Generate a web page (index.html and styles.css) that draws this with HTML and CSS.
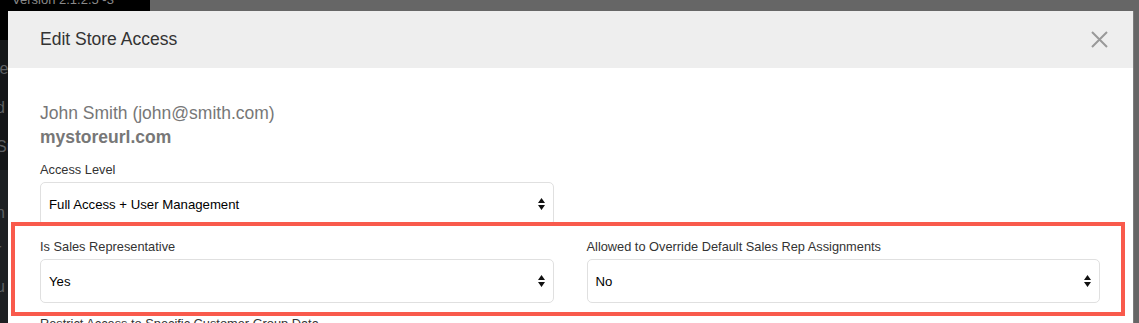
FILE: index.html
```html
<!DOCTYPE html>
<html lang="en">

<head>
    <meta charset="UTF-8">
    <meta name="viewport" content="width=device-width, initial-scale=1.0">
    <title>Edit Store Access</title>
    <link rel="stylesheet" href="styles.css">
</head>

<body>
    <div class="page">
        <aside class="sidebar">
            <div class="version">Version 2.1.2.5 -3</div>
            <div class="nav-gap"></div>
            <ul class="nav nav-upper">
                <li>ie</li>
                <li>d</li>
                <li>Su</li>
            </ul>
            <ul class="nav nav-lower">
                <li>n</li>
                <li>r</li>
                <li>u</li>
            </ul>
        </aside>
        <main class="dimmed"></main>
    </div>

    <div class="modal">
        <div class="modal-header">
            <h4 class="modal-title">Edit Store Access</h4>
            <svg class="close" width="17" height="17" viewBox="0 0 17 17">
                <path d="M1 1 L16 16 M16 1 L1 16" stroke="#999" stroke-width="2" fill="none" />
            </svg>
        </div>

        <div class="modal-body">
            <div class="user-name">John Smith (john@smith.com)</div>
            <div class="store-url">mystoreurl.com</div>

            <div class="form-grid">
                <div class="form-group">
                    <label>Access Level</label>
                    <div class="select">
                        <span>Full Access + User Management</span>
                        <svg class="arrows" width="7" height="12" viewBox="0 0 7 12">
                            <path d="M0 5 L3.5 0 L7 5 Z M0 7 L3.5 12 L7 7 Z" fill="#111" />
                        </svg>
                    </div>
                </div>
                <div></div>

                <div class="form-group">
                    <label>Is Sales Representative</label>
                    <div class="select">
                        <span>Yes</span>
                        <svg class="arrows" width="7" height="12" viewBox="0 0 7 12">
                            <path d="M0 5 L3.5 0 L7 5 Z M0 7 L3.5 12 L7 7 Z" fill="#111" />
                        </svg>
                    </div>
                </div>
                <div class="form-group">
                    <label>Allowed to Override Default Sales Rep Assignments</label>
                    <div class="select">
                        <span>No</span>
                        <svg class="arrows" width="7" height="12" viewBox="0 0 7 12">
                            <path d="M0 5 L3.5 0 L7 5 Z M0 7 L3.5 12 L7 7 Z" fill="#111" />
                        </svg>
                    </div>
                </div>

                <div class="form-group wide">
                    <label>Restrict Access to Specific Customer Group Data</label>
                </div>
            </div>
        </div>
    </div>

    <!-- annotation box drawn over the sales rep row -->
    <div class="highlight"></div>
</body>

</html>
```

FILE: styles.css
```css
body {
    margin: 0;
    padding: 0;
    font-family: "Liberation Sans", Arial, sans-serif;
    overflow: hidden;
}

.page {
    display: flex;
    height: 323px;
}

.sidebar {
    width: 150px;
    background-color: #000;
    display: flex;
    flex-direction: column;
    overflow: hidden;
}

.version {
    height: 11px;
    line-height: 0;
    font-size: 13px;
    color: #8a8a8a;
    padding-left: 12px;
    overflow: hidden;
}

.nav-gap {
    height: 29px;
    background-color: #000;
}

.nav {
    list-style-type: none;
    margin: 0;
    padding: 0;
    color: #5e6063;
    font-size: 16px;
}

.nav li {
    margin-left: -4px;
}

.nav-upper {
    height: 130px;
    background-color: #141618;
    padding-top: 20px;
    box-sizing: border-box;
}

.nav-upper li {
    height: 39px;
}

.nav-lower {
    flex: 1;
    background-color: #1d2023;
    padding-top: 34px;
}

.nav-lower li {
    height: 37px;
}

.dimmed {
    flex: 1;
    background-color: #666;
}

.modal {
    position: absolute;
    left: 8px;
    top: 11px;
    width: 1125px;
    height: 312px;
    overflow: hidden;
    background-color: #fff;
    border-right: 1px solid #7c7c7c;
}

.modal-header {
    height: 57px;
    background-color: #eee;
    display: flex;
    align-items: center;
    justify-content: space-between;
    padding: 0 25px 0 32px;
}

.modal-title {
    margin: 0;
    font-size: 17.5px;
    font-weight: normal;
    color: #333;
}

.modal-body {
    padding: 33px 33px 0 32px;
}

.user-name {
    font-size: 17.5px;
    line-height: 24px;
    color: #777;
}

.store-url {
    font-size: 17.5px;
    line-height: 24px;
    font-weight: bold;
    color: #777;
    margin-bottom: 11px;
}

.form-grid {
    display: grid;
    grid-template-columns: 1fr 1fr;
    column-gap: 33px;
}

.form-group {
    margin-bottom: 11px;
}

.form-group.wide {
    grid-column: 1 / 3;
}

.form-group label {
    display: block;
    font-size: 12.8px;
    line-height: 20px;
    color: #333;
    margin-bottom: 2px;
}

.select {
    height: 44px;
    box-sizing: border-box;
    border: 1px solid #e0e0e0;
    border-radius: 5px;
    padding: 0 8px;
    display: flex;
    align-items: center;
    justify-content: space-between;
    font-size: 13.2px;
    color: #000;
}

.highlight {
    position: absolute;
    left: 11px;
    top: 222px;
    width: 1114px;
    height: 94px;
    box-sizing: border-box;
    border: 4px solid #f95a4c;
}
```
